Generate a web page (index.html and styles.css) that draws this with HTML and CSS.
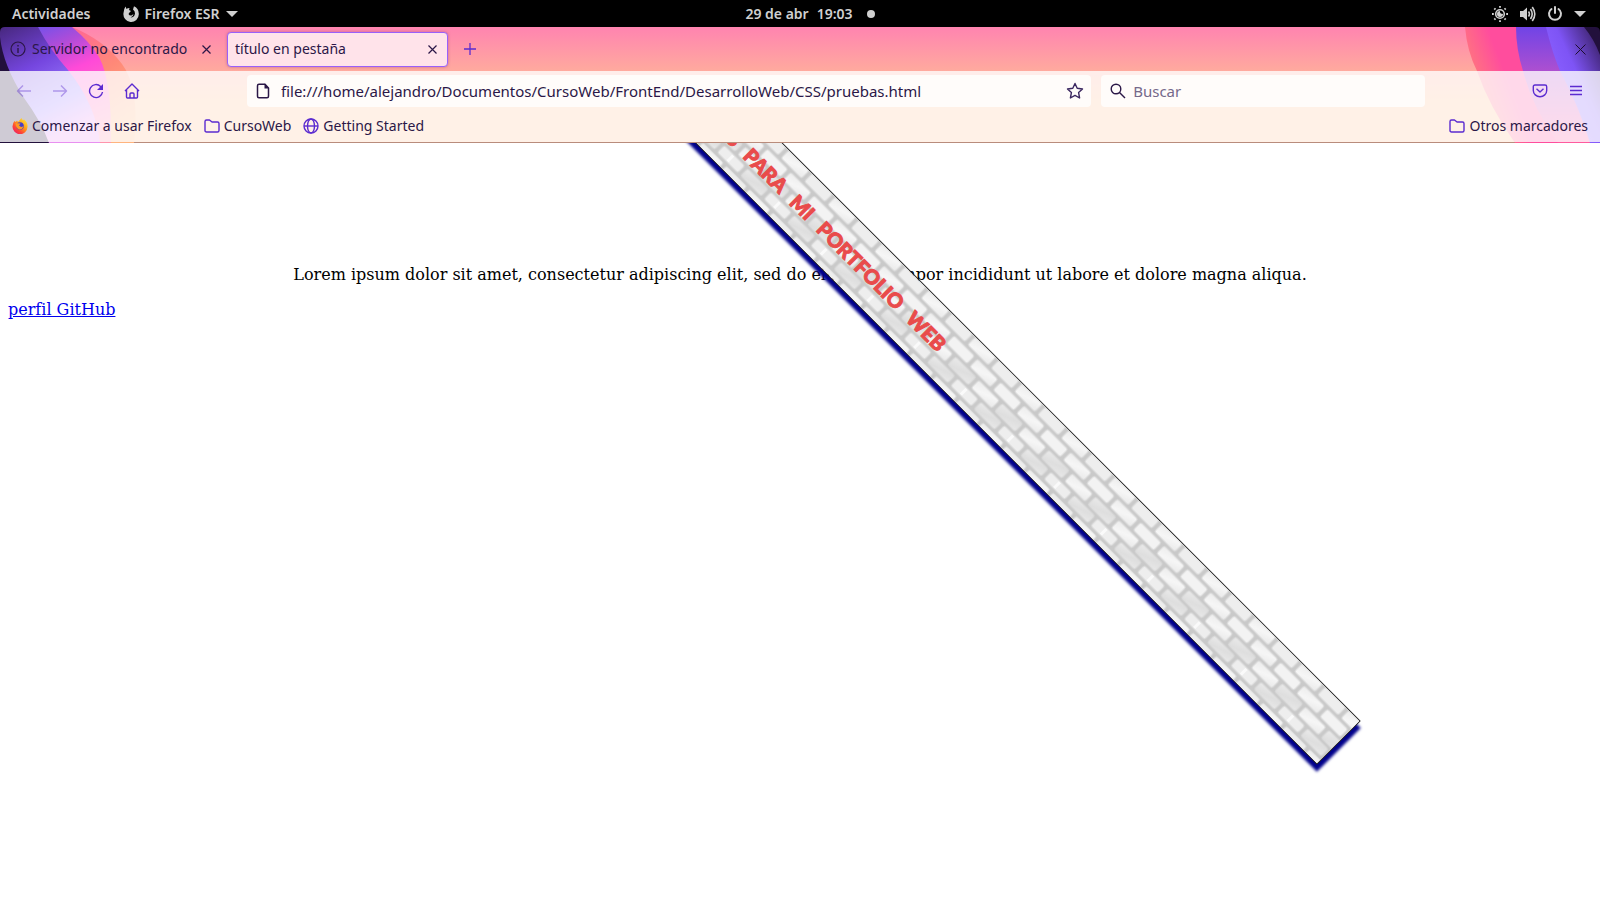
FILE: index.html
```html
<!DOCTYPE html>
<html lang="es">
<head>
<meta charset="utf-8">
<title>título en pestaña</title>
<link rel="stylesheet" href="styles.css">
</head>
<body>
<div class="topbar">
  <div class="topbar-left">
    <button class="top-btn">Actividades</button>
    <button class="top-btn app-menu">
      <svg width="16" height="16" viewBox="0 0 16 16"><path fill="#d0d0d0" d="M2.500.5 3.500 3Q4.500 2 6.500 2L6 4l2 1-1.500 1.500L5.500 8q1 2 3 1.500L10.500 8Q10 11 7.500 11.500q4 0 4.500-4Q12 5 10 3.500L11 .2q5 2.300 4.800 8A7.700 7.700 0 1 1 .5 7Q.7 3 2.500.5z"/></svg>
      Firefox ESR
      <svg width="12" height="6" viewBox="0 0 12 6"><path fill="#d0d0d0" d="M0 0h12L6 6z"/></svg>
    </button>
  </div>
  <div class="clock"><span>29 de abr</span><span>19:03</span><i class="dot"></i></div>
  <div class="tray">
    <svg width="16" height="16" viewBox="0 0 16 16"><g stroke="#d0d0d0" fill="none"><circle cx="8" cy="8" r="4.300" stroke-width="1.600"/><path stroke-width="1.800" d="M8 0v1.800M8 14.200v1.800M0 8h1.800M14.200 8h1.800M2.300 2.300l1.200 1.200M12.500 12.500l1.200 1.200M2.300 13.700l1.200-1.200M12.500 3.500l1.200-1.200"/></g><path fill="#d0d0d0" d="M8 5q-.5 3 3 3a3 3 0 1 1-3-3z"/></svg>
    <svg width="17" height="16" viewBox="0 0 17 16"><path fill="#d0d0d0" d="M1 5h3l4-3.500v13L4 11H1z"/><path fill="none" stroke="#d0d0d0" stroke-width="1.600" d="M9.500 5.500q1.800 2.500 0 5M11.500 3q3.400 5 0 10M13.300 1q5 7 0 14"/></svg>
    <svg width="16" height="16" viewBox="0 0 16 16"><path fill="none" stroke="#d0d0d0" stroke-width="2" stroke-linecap="round" d="M4.500 3a6 6 0 1 0 7 0M8 1v6"/></svg>
    <svg width="12" height="6" viewBox="0 0 12 6"><path fill="#d0d0d0" d="M0 0h12L6 6z"/></svg>
  </div>
</div>

<header class="browser">
  <svg class="art art-left" width="160" height="116" viewBox="0 0 160 116">
    <defs>
      <linearGradient id="l1" x1="0" y1="0" x2=".7" y2="1"><stop offset=".15" stop-color="#ff5c9c"/><stop offset=".6" stop-color="#ff8878"/><stop offset="1" stop-color="#ffb47e"/></linearGradient>
      <linearGradient id="l2" x1=".4" y1="0" x2=".8" y2="1"><stop offset="0" stop-color="#7b50e8"/><stop offset=".17" stop-color="#b04cd8"/><stop offset=".4" stop-color="#ff4ad8"/><stop offset="1" stop-color="#ff94ac"/></linearGradient>
      <linearGradient id="l3" x1="0" y1="0" x2=".45" y2="1"><stop offset="0" stop-color="#47277e"/><stop offset=".4" stop-color="#7546df"/><stop offset=".75" stop-color="#9a7cff"/><stop offset="1" stop-color="#e890f0"/></linearGradient>
    </defs>
    <path fill="url(#l1)" d="M0 0H72Q104 13 122 37T134 116H0z"/>
    <path fill="url(#l2)" d="M0 0H72Q90 15 99 30Q112 54 111 116H0z"/>
    <path fill="url(#l3)" d="M0 0H38Q50 23 68 43Q96 78 100 116H0z"/>
    <path fill="#22103c" d="M0 10Q3 38 24 71Q41 94 49 116H0z"/>
    <path fill="#000" d="M0 0h5Q0 0 0 5z"/>
  </svg>
  <svg class="art art-right" width="140" height="116" viewBox="0 0 140 116">
    <defs>
      <linearGradient id="r1" x1="0" y1=".5" x2=".6" y2=".3"><stop offset="0" stop-color="#ff8474"/><stop offset=".5" stop-color="#ff4d9d"/></linearGradient>
      <linearGradient id="r2" x1="0" y1="0" x2="0" y2="1"><stop offset="0" stop-color="#7044e6"/><stop offset=".4" stop-color="#b050cf"/><stop offset="1" stop-color="#ff5a9e"/></linearGradient>
      <linearGradient id="r3" x1=".9" y1="0" x2=".3" y2=".6"><stop offset="0" stop-color="#3a2066"/><stop offset=".6" stop-color="#7e54f5"/><stop offset="1" stop-color="#8a60ff"/></linearGradient>
    </defs>
    <path fill="url(#r1)" d="M5 0Q7 24 17 44Q29 79 55 116H140V0z"/>
    <path fill="url(#r2)" d="M56 0Q56 22 63 44Q72 80 98 116H140V0z"/>
    <path fill="url(#r3)" d="M86 0Q92 25 100 44Q119 79 130 116H140V0z"/>
    <path fill="#22103c" d="M124 0Q134 12 140 28V0z"/>
    <path fill="#000" d="M135 0h5v5q0-5-5-5z"/>
  </svg>

  <div class="tabs">
    <div class="tab">
      <svg width="16" height="16" viewBox="0 0 16 16"><circle cx="8" cy="8" r="7" fill="none" stroke="#2b1747" stroke-width="1.200"/><path stroke="#2b1747" stroke-width="1.400" d="M8 7v5M8 4v1.500"/></svg>
      <span class="tab-title">Servidor no encontrado</span>
      <button class="close" aria-label="Cerrar pestaña"><svg width="9" height="9" viewBox="0 0 9 9"><path stroke="#2b1747" stroke-width="1.200" d="M.5.5l8 8M8.500.5l-8 8"/></svg></button>
    </div>
    <div class="tab active">
      <span class="tab-title">título en pestaña</span>
      <button class="close" aria-label="Cerrar pestaña"><svg width="9" height="9" viewBox="0 0 9 9"><path stroke="#2b1747" stroke-width="1.200" d="M.5.5l8 8M8.500.5l-8 8"/></svg></button>
    </div>
    <button class="new-tab" aria-label="Nueva pestaña"><svg width="12" height="12" viewBox="0 0 12 12"><path stroke="#5b2bd0" stroke-width="1.300" d="M6 0v12M0 6h12"/></svg></button>
    <button class="win-close" aria-label="Cerrar ventana"><svg width="11" height="11" viewBox="0 0 11 11"><path stroke="#1c0d30" d="M.5.5l10 10M10.500.5l-10 10"/></svg></button>
  </div>

  <div class="tools">
    <div class="nav">
      <div class="nav-buttons">
        <button class="icon faded" aria-label="Atrás"><svg width="16" height="16" viewBox="0 0 16 16"><path d="M15 8H1.500M7 2.500L1.500 8 7 13.500"/></svg></button>
        <button class="icon faded" aria-label="Adelante"><svg width="16" height="16" viewBox="0 0 16 16"><path d="M1 8h13.500M9 2.500L14.500 8 9 13.500"/></svg></button>
        <button class="icon" aria-label="Recargar"><svg width="16" height="16" viewBox="0 0 16 16"><path d="M14.500 9A6.500 6.500 0 1 1 12.600 3.400L14 5"/><path fill="#5b2bd0" stroke="none" d="M15 1v6H9z"/></svg></button>
        <button class="icon" aria-label="Inicio"><svg width="16" height="16" viewBox="0 0 16 16"><path d="M1 8l7-7 7 7M2.500 7v7q0 1 1 1h9q1 0 1-1V7M6 15v-4q0-1 1-1h2q1 0 1 1v4"/></svg></button>
      </div>
      <div class="field url">
        <svg width="14" height="16" viewBox="0 0 14 16"><path fill="none" stroke="#2b1747" stroke-width="1.500" d="M9 1.200H3q-1.500 0-1.500 1.500v10.600q0 1.500 1.500 1.500h8q1.500 0 1.500-1.500V5z"/><path fill="#2b1747" d="M8.500.5L13.200 5.600H8.500z"/></svg>
        <input type="text" aria-label="Dirección" value="file:///home/alejandro/Documentos/CursoWeb/FrontEnd/DesarrolloWeb/CSS/pruebas.html">
        <button class="bare" aria-label="Añadir a marcadores"><svg width="18" height="18" viewBox="0 0 18 18"><path fill="none" stroke="#3b2860" stroke-width="1.400" stroke-linejoin="round" d="M9 1.500l2.200 4.800 5.300.7-3.900 3.600 1 5.400L9 13.400 4.400 16l1-5.400L1.500 7l5.300-.7z"/></svg></button>
      </div>
      <div class="field search">
        <svg width="16" height="16" viewBox="0 0 16 16"><g fill="none" stroke="#2b1747" stroke-width="1.400"><circle cx="6" cy="6" r="4.800"/><path d="M9.500 9.500l5.500 5.500"/></g></svg>
        <input type="search" aria-label="Buscar" placeholder="Buscar">
      </div>
      <div class="nav-end">
        <button class="icon" aria-label="Pocket"><svg width="16" height="16" viewBox="0 0 16 16"><path d="M3 2h10q1.700 0 1.700 1.700V7.500a6.700 6.200 0 0 1-13.400 0V3.700Q1.300 2 3 2zM4.500 5.800L8 9l3.500-3.200"/></svg></button>
        <button class="icon" aria-label="Menú"><svg width="16" height="16" viewBox="0 0 16 16"><path d="M2 3.500h12M2 7.500h12M2 11.500h12"/></svg></button>
      </div>
    </div>
    <nav class="bookmarks">
      <a href="#"><svg width="16" height="16" viewBox="0 0 16 16"><defs><linearGradient id="fx" x1=".9" y1="0" x2=".1" y2="1"><stop offset="0" stop-color="#fff04a"/><stop offset=".4" stop-color="#ffa016"/><stop offset=".7" stop-color="#ff4438"/><stop offset="1" stop-color="#e51b70"/></linearGradient></defs><path fill="url(#fx)" d="M2.500 3l1.300 1L5 2.500l1 1.500 3.500-4 1.200 2 1.500-.5Q16 4.500 15.500 9A7.500 7.500 0 0 1 .5 8.500Q.5 5 2.500 3z"/><circle cx="8" cy="8" r="3.800" fill="#4540c8"/><path fill="#ff9820" d="M3.500 5l5 .5-1.500 2 2 1.500q1.500 0 2.500-1-1 4-4.500 3.500Q3.500 10 3.500 5z"/></svg>Comenzar a usar Firefox</a>
      <a href="#"><svg class="line" width="16" height="16" viewBox="0 0 16 16"><path d="M1 12.500v-9Q1 2 2.500 2h3L8 4h5.500Q15 4 15 5.500v7q0 1.500-1.500 1.500h-11Q1 14 1 12.500z"/></svg>CursoWeb</a>
      <a href="#"><svg class="line" width="16" height="16" viewBox="0 0 16 16"><circle cx="8" cy="8" r="7"/><ellipse cx="8" cy="8" rx="3.500" ry="7"/><path d="M1 8h14"/></svg>Getting Started</a>
      <a href="#" class="others"><svg class="line" width="16" height="16" viewBox="0 0 16 16"><path d="M1 12.500v-9Q1 2 2.500 2h3L8 4h5.500Q15 4 15 5.500v7q0 1.500-1.500 1.500h-11Q1 14 1 12.500z"/></svg>Otros marcadores</a>
    </nav>
  </div>
</header>

<main class="page">
  <h1 class="banner">
    <svg class="bricks" width="100%" height="100%">
      <defs>
        <linearGradient id="ba" x1="0" y1="0" x2="1" y2="1"><stop offset="0" stop-color="#ececec"/><stop offset=".5" stop-color="#f6f6f6"/><stop offset="1" stop-color="#e9e9e9"/></linearGradient>
        <linearGradient id="bb" x1="0" y1="0" x2="1" y2="1"><stop offset="0" stop-color="#eaeaea"/><stop offset=".5" stop-color="#dedede"/><stop offset="1" stop-color="#e8e8e8"/></linearGradient>
        <pattern id="wall" width="66" height="55" patternUnits="userSpaceOnUse">
          <rect width="66" height="55" fill="#c9c9c9"/>
          <g stroke="#d8d8d8">
            <rect x="-11" y="0" width="29" height="11" rx="2" fill="url(#ba)"/><rect x="22" y="0" width="29" height="11" rx="2" fill="#eeeeee"/><rect x="55" y="0" width="29" height="11" rx="2" fill="url(#ba)"/>
            <rect x="6" y="14" width="29" height="11" rx="2" fill="url(#ba)"/><rect x="39" y="14" width="29" height="11" rx="2" fill="#f3f3f3"/><rect x="-27" y="14" width="29" height="11" rx="2" fill="#f3f3f3"/>
            <rect x="-11" y="28" width="29" height="11" rx="2" fill="url(#bb)"/><rect x="22" y="28" width="29" height="11" rx="2" fill="url(#ba)"/><rect x="55" y="28" width="29" height="11" rx="2" fill="url(#bb)"/>
            <rect x="6" y="42" width="29" height="10" rx="2" fill="#eeeeee"/><rect x="39" y="42" width="29" height="10" rx="2" fill="url(#bb)"/><rect x="-27" y="42" width="29" height="10" rx="2" fill="url(#bb)"/>
          </g>
          <rect x="18" y="43" width="3" height="8" fill="#fafafa"/>
        </pattern>
      </defs>
      <rect width="100%" height="100%" fill="url(#wall)"/>
    </svg>
    <span class="banner-text"><span>S</span> <span>PARA</span> <span>MI</span> <span>PORTFOLIO</span> <span>WEB</span></span>
  </h1>
  <p class="lorem">Lorem ipsum dolor sit amet, consectetur adipiscing elit, sed do eiusmod tempor incididunt ut labore et dolore magna aliqua.</p>
  <a class="profile" href="#">perfil GitHub</a>
</main>
</body>
</html>
```
FILE: styles.css
```css
* { box-sizing: border-box; }
body {
  margin: 0;
  min-height: 100vh;
  display: flex;
  flex-direction: column;
  background: #fff;
  font: 14px/20px "Noto Sans", sans-serif;
  color: #2b1747;
}
button { border: 0; padding: 0; background: none; font: inherit; color: inherit; }
svg { display: block; flex: none; }

.topbar {
  display: grid;
  grid-template-columns: 1fr auto 1fr;
  align-items: center;
  height: 27px;
  padding: 0 14px 0 12px;
  background: #000;
  color: #d0d0d0;
  font-weight: 600;
}
.topbar-left { display: flex; gap: 32px; }
.app-menu { display: flex; align-items: center; gap: 6px; }
.clock { display: flex; align-items: center; gap: 8px; }
.dot { width: 8px; height: 8px; margin: 0 -22px 0 6px; border-radius: 50%; background: #d0d0d0; }
.tray { display: flex; align-items: center; justify-content: flex-end; gap: 11px; }

.browser {
  position: relative;
  background: linear-gradient(#ff84b0, #ffaa9e 44px, #ffbe8e 76px, #ffbe8e);
  border-bottom: 1px solid #b98c7c;
}
.art { position: absolute; top: 0; }
.art-left { left: 0; }
.art-right { right: 0; }
.tabs { position: relative; display: flex; align-items: center; height: 44px; padding: 0 14px 0 2px; }
.tab {
  display: flex;
  align-items: center;
  gap: 6px;
  width: 221px;
  height: 35px;
  padding: 0 12px 0 8px;
  margin-right: 4px;
}
.tab.active {
  background: #ffe3ea;
  border: 1px solid #9a60fa;
  border-radius: 4px;
  box-shadow: 0 0 3px #80408080;
  padding: 0 10px 0 7px;
}
.tab-title { flex: 1; white-space: nowrap; }
.new-tab { margin-left: 12px; }
.win-close { margin-left: auto; }

.tools { position: relative; background: #ffffffc8; }
.nav { display: flex; align-items: center; height: 40px; padding: 0 16px; }
.nav-buttons { display: flex; gap: 20px; width: 231px; }
.icon svg, .line { fill: none; stroke: #5b2bd0; stroke-width: 1.4; stroke-linejoin: round; }
.icon.faded { opacity: .4; }
.field {
  display: flex;
  align-items: center;
  height: 32px;
  border-radius: 4px;
  background: #fffcfa;
  font-size: 15px;
}
.field input {
  flex: 1;
  min-width: 0;
  border: 0;
  padding: 0;
  outline: 0;
  background: none;
  font: inherit;
  color: inherit;
}
.field input::placeholder { color: #75698a; opacity: 1; }
.url { flex: 853; gap: 11px; padding: 0 7px 0 9px; }
.search { flex: 315; gap: 7px; margin-left: 10px; padding: 0 9px; }
.nav-end { display: flex; justify-content: flex-end; gap: 20px; width: 159px; }
.bookmarks { display: flex; align-items: center; gap: 12px; height: 31px; padding: 0 12px 1px; }
.bookmarks a { display: flex; align-items: center; gap: 4px; color: inherit; text-decoration: none; }
.bookmarks .others { margin-left: auto; }

.page {
  flex: 1;
  display: flow-root;
  overflow: hidden;
  padding: 0 8px;
  color: #000;
  font: 16px/19px "DejaVu Serif", serif;
}
.banner {
  position: relative;
  display: flex;
  justify-content: center;
  align-items: center;
  height: 62px;
  margin: 30px;
  border: 1px solid #222;
  box-shadow: 5px 5px 3px #00008b;
  transform: rotate(45deg);
}
.bricks { position: absolute; inset: 0; }
.banner-text {
  position: relative;
  display: flex;
  gap: 13px;
  padding-left: 104px;
  color: #e94b4b;
  font: 900 20px/24px Lato, sans-serif;
  -webkit-text-stroke: 1px #e94b4b;
  white-space: nowrap;
}
.lorem { margin: 0 0 16px; text-align: center; }
.profile { color: #00e; }
```
